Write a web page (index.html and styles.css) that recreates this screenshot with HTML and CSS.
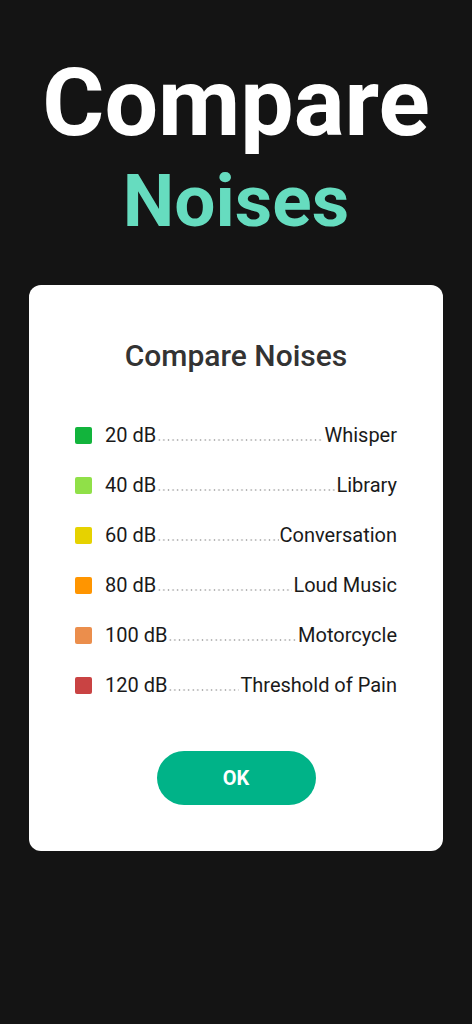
FILE: index.html
```html
<!DOCTYPE html>
<html>
<head>
<meta charset="utf-8">
<link rel="stylesheet" href="styles.css">
</head>
<body>
<main class="screen">
  <h1 class="hero">
    <span class="hero-line1">Compare</span>
    <span class="hero-line2">Noises</span>
  </h1>
  <section class="card">
    <h2 class="card-title">Compare Noises</h2>
    <ul class="list">
      <li class="row"><span class="swatch c20"></span><span class="db">20 dB</span><span class="dots"></span><span class="label">Whisper</span></li>
      <li class="row"><span class="swatch c40"></span><span class="db">40 dB</span><span class="dots"></span><span class="label">Library</span></li>
      <li class="row"><span class="swatch c60"></span><span class="db">60 dB</span><span class="dots"></span><span class="label">Conversation</span></li>
      <li class="row"><span class="swatch c80"></span><span class="db">80 dB</span><span class="dots"></span><span class="label">Loud Music</span></li>
      <li class="row"><span class="swatch c100"></span><span class="db">100 dB</span><span class="dots"></span><span class="label">Motorcycle</span></li>
      <li class="row"><span class="swatch c120"></span><span class="db">120 dB</span><span class="dots"></span><span class="label">Threshold of Pain</span></li>
    </ul>
    <button class="ok">OK</button>
  </section>
</main>
</body>
</html>
```

FILE: styles.css
```css
* { box-sizing: border-box; }
html, body { margin: 0; padding: 0; }
body {
  background: #141414;
  font-family: Roboto, "Liberation Sans", sans-serif;
  width: 472px;
  height: 1024px;
  overflow: hidden;
}
.screen {
  display: flex;
  flex-direction: column;
  align-items: center;
  padding-top: 47px;
}
.hero {
  margin: 0;
  display: flex;
  flex-direction: column;
  align-items: center;
  font-weight: 700;
  line-height: normal;
}
.hero-line1 {
  color: #ffffff;
  font-size: 95px;
}
.hero-line2 {
  color: #66dcbf;
  font-size: 73px;
}
.card {
  margin-top: 41px;
  width: 414px;
  background: #ffffff;
  border-radius: 12px;
  padding: 53px 46px 46px;
  display: flex;
  flex-direction: column;
  align-items: stretch;
}
.card-title {
  margin: 0;
  text-align: center;
  font-weight: 500;
  font-size: 30px;
  line-height: 36px;
  color: #333333;
}
.list {
  list-style: none;
  margin: 49px 0 0;
  padding: 0;
  display: flex;
  flex-direction: column;
  gap: 26px;
}
.row {
  display: flex;
  align-items: baseline;
  height: 24px;
  font-size: 20px;
  line-height: 24px;
  color: #1a1a1a;
}
.swatch {
  width: 17px;
  height: 17px;
  border-radius: 2px;
  margin-right: 13px;
  align-self: center;
  flex: none;
}
.c20 { background: #12b43c; }
.c40 { background: #90e048; }
.c60 { background: #e6d200; }
.c80 { background: #ff9500; }
.c100 { background: #eb8e4c; }
.c120 { background: #c94343; }
.db { flex: none; }
.dots {
  flex: 1;
  min-width: 0;
  height: 4px;
  margin: 0 1px;
  background-image: radial-gradient(circle, #b0b0b0 0.8px, transparent 1.1px);
  background-size: 4.6px 4px;
  background-repeat: repeat-x;
  align-self: baseline;
}
.label { flex: none; }
.ok {
  align-self: center;
  margin-top: 54px;
  width: 159px;
  height: 54px;
  border: none;
  border-radius: 27px;
  background: #00b388;
  color: #ffffff;
  font-family: Roboto, "Liberation Sans", sans-serif;
  font-weight: 700;
  font-size: 20px;
}
```
